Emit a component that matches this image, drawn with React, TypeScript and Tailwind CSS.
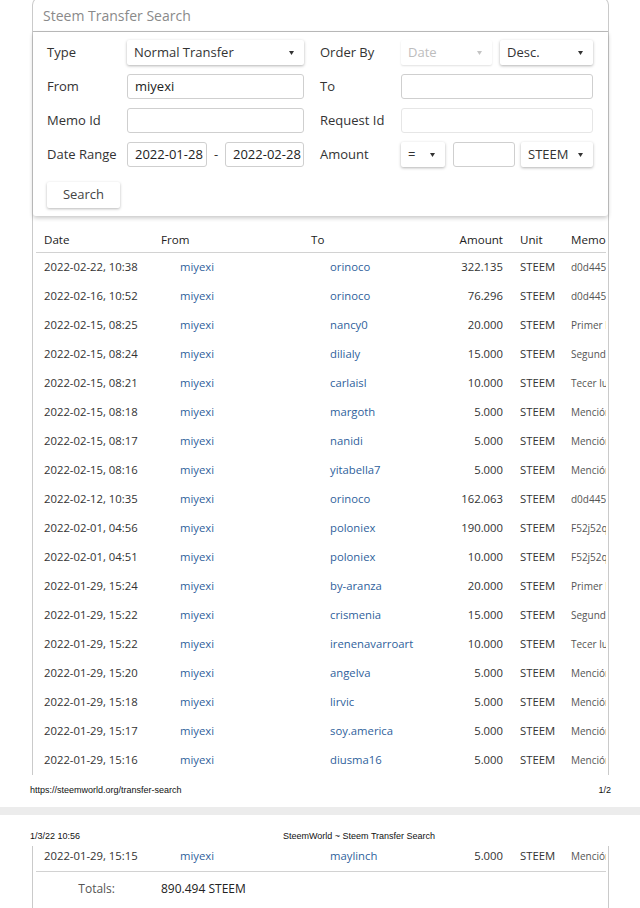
const rows = [
  ['2022-02-22, 10:38', 'orinoco', '322.135', 'd0d4454a7c1f'],
  ['2022-02-16, 10:52', 'orinoco', '76.296', 'd0d4454a7c1f'],
  ['2022-02-15, 08:25', 'nancy0', '20.000', 'Primer lugar'],
  ['2022-02-15, 08:24', 'dilialy', '15.000', 'Segundo lugar'],
  ['2022-02-15, 08:21', 'carlaisl', '10.000', 'Tecer lugar'],
  ['2022-02-15, 08:18', 'margoth', '5.000', 'Mención especial'],
  ['2022-02-15, 08:17', 'nanidi', '5.000', 'Mención especial'],
  ['2022-02-15, 08:16', 'yitabella7', '5.000', 'Mención especial'],
  ['2022-02-12, 10:35', 'orinoco', '162.063', 'd0d4454a7c1f'],
  ['2022-02-01, 04:56', 'poloniex', '190.000', 'F52j52q9x1'],
  ['2022-02-01, 04:51', 'poloniex', '10.000', 'F52j52q9x1'],
  ['2022-01-29, 15:24', 'by-aranza', '20.000', 'Primer lugar'],
  ['2022-01-29, 15:22', 'crismenia', '15.000', 'Segundo lugar'],
  ['2022-01-29, 15:22', 'irenenavarroart', '10.000', 'Tecer lugar'],
  ['2022-01-29, 15:20', 'angelva', '5.000', 'Mención especial'],
  ['2022-01-29, 15:18', 'lirvic', '5.000', 'Mención especial'],
  ['2022-01-29, 15:17', 'soy.america', '5.000', 'Mención especial'],
  ['2022-01-29, 15:16', 'diusma16', '5.000', 'Mención especial'],
]

function Caret({ light }: { light?: boolean }) {
  return (
    <svg width="5" height="4" viewBox="0 0 5 4" className="shrink-0">
      <path d="M0 0h5L2.5 4z" fill={light ? '#c4c4c4' : '#333'} />
    </svg>
  )
}

function Select({ value, width, light }: { value: string; width: string; light?: boolean }) {
  return (
    <div
      className={`${width} h-[25px] flex items-center justify-between pl-[7px] pr-[10px] bg-white rounded-[2px] ${
        light
          ? 'text-[#bdbdbd] shadow-[0_1px_2px_rgba(0,0,0,0.12)]'
          : 'text-[#333] shadow-[0_1px_3px_rgba(0,0,0,0.3)]'
      }`}
    >
      <span>{value}</span>
      <Caret light={light} />
    </div>
  )
}

function Input({ value, width, light }: { value?: string; width: string; light?: boolean }) {
  return (
    <div
      className={`${width} h-[25px] flex items-center pl-[7px] bg-white rounded-[3px] border ${
        light ? 'border-[#e6e6e6]' : 'border-[#cfcfcf]'
      } text-[#222]`}
    >
      {value}
    </div>
  )
}

function Row({ r, border }: { r: string[]; border?: boolean }) {
  return (
    <div
      className={`flex items-center text-[11.3px] text-[#333] ${
        border ? 'h-[26px] pb-[4px] border-b border-[#d2d2d2]' : 'h-[29px]'
      }`}
    >
      <div className="w-[117px] pl-[8px]">{r[0]}</div>
      <div className="w-[150px] pl-[27px] text-[#2f5f9c]">miyexi</div>
      <div className="w-[150px] pl-[27px] text-[#2f5f9c]">{r[1]}</div>
      <div className="w-[58px] text-right pr-[8px]">{r[2]}</div>
      <div className="w-[52px] pl-[9px]">STEEM</div>
      <div className="w-[43px] pl-[8px] overflow-hidden whitespace-nowrap text-[10px] text-[#555]">{r[3]}</div>
    </div>
  )
}

export default function App() {
  return (
    <div className="w-[640px] h-[908px] overflow-hidden bg-white" style={{ fontFamily: '"Open Sans", sans-serif' }}>
      {/* page 1 */}
      <div className="h-[807px] flex flex-col">
        <div className="ml-[32px] w-[577px] h-[778px] -mt-[3px] border-x border-t border-[#cacaca] rounded-t-[8px] flex flex-col">
          <div className="h-[34px] shrink-0 flex items-center pl-[10px] pt-[2px] text-[14px] text-[#8a8a8a] border-b border-[#bdbdbd]">
            Steem Transfer Search
          </div>
          <div className="h-[184px] shrink-0 bg-white rounded-b-[3px] shadow-[0_2px_4px_rgba(0,0,0,0.22)] pt-[8px] pl-[14px] text-[13px] text-[#333]">
            <div className="flex flex-col gap-[9px]">
              <div className="flex items-center">
                <div className="w-[80px]">Type</div>
                <Select value="Normal Transfer" width="w-[177px]" />
                <div className="w-[81px] ml-[16px]">Order By</div>
                <Select value="Date" width="w-[91px]" light />
                <div className="ml-[8px]">
                  <Select value="Desc." width="w-[93px]" />
                </div>
              </div>
              <div className="flex items-center">
                <div className="w-[80px]">From</div>
                <Input value="miyexi" width="w-[177px]" />
                <div className="w-[81px] ml-[16px]">To</div>
                <Input width="w-[192px]" />
              </div>
              <div className="flex items-center">
                <div className="w-[80px]">Memo Id</div>
                <Input width="w-[177px]" />
                <div className="w-[81px] ml-[16px]">Request Id</div>
                <Input width="w-[192px]" light />
              </div>
              <div className="flex items-center">
                <div className="w-[80px]">Date Range</div>
                <Input value="2022-01-28" width="w-[80px]" />
                <div className="w-[18px] text-center">-</div>
                <Input value="2022-02-28" width="w-[79px]" />
                <div className="w-[81px] ml-[16px]">Amount</div>
                <Select value="=" width="w-[44px]" />
                <div className="ml-[8px]">
                  <Input width="w-[62px]" />
                </div>
                <div className="ml-[6px]">
                  <Select value="STEEM" width="w-[72px]" />
                </div>
              </div>
            </div>
            <div className="mt-[15px] w-[73px] h-[26px] flex items-center justify-center rounded-[2px] shadow-[0_1px_3px_rgba(0,0,0,0.28)] text-[#444]">
              Search
            </div>
          </div>

          {/* table */}
          <div className="ml-[3px] w-[570px]">
            <div className="mt-[13px] h-[24px] pb-[2px] flex items-center text-[11.6px] text-[#222] border-b border-[#d2d2d2]">
              <div className="w-[117px] pl-[8px]">Date</div>
              <div className="w-[150px] pl-[8px]">From</div>
              <div className="w-[150px] pl-[8px]">To</div>
              <div className="w-[58px] text-right pr-[8px]">Amount</div>
              <div className="w-[52px] pl-[9px]">Unit</div>
              <div className="w-[43px] pl-[8px]">Memo</div>
            </div>
            {rows.map((r, i) => (
              <Row key={i} r={r} />
            ))}
          </div>
        </div>
        <div className="mt-[9px] pl-[30px] pr-[29px] flex justify-between text-[9px] text-[#111]" style={{ fontFamily: '"Liberation Sans", Arial, sans-serif' }}>
          <span>https://steemworld.org/transfer-search</span>
          <span>1/2</span>
        </div>
      </div>

      {/* page gap */}
      <div className="h-[8px] bg-[#ececec]" />

      {/* page 2 */}
      <div className="pt-[16px]">
        <div className="relative h-[12px] pl-[30px] text-[9px] text-[#111] flex items-center" style={{ fontFamily: '"Liberation Sans", Arial, sans-serif' }}>
          <span>1/3/22 10:56</span>
          <span className="absolute left-0 right-0 text-center pl-[78px]">SteemWorld ~ Steem Transfer Search</span>
        </div>
        <div className="mt-[3px] ml-[32px] w-[577px] border-x border-[#cacaca] h-[80px]">
          <div className="ml-[3px] w-[570px]">
            <Row r={['2022-01-29, 15:15', 'maylinch', '5.000', 'Mención especial']} border />
            <div className="flex items-center h-[34px] text-[12px]">
              <div className="w-[79px] text-right text-[#555]">Totals:</div>
              <div className="ml-[46px] text-[#222]">890.494 STEEM</div>
            </div>
          </div>
        </div>
      </div>
    </div>
  )
}
